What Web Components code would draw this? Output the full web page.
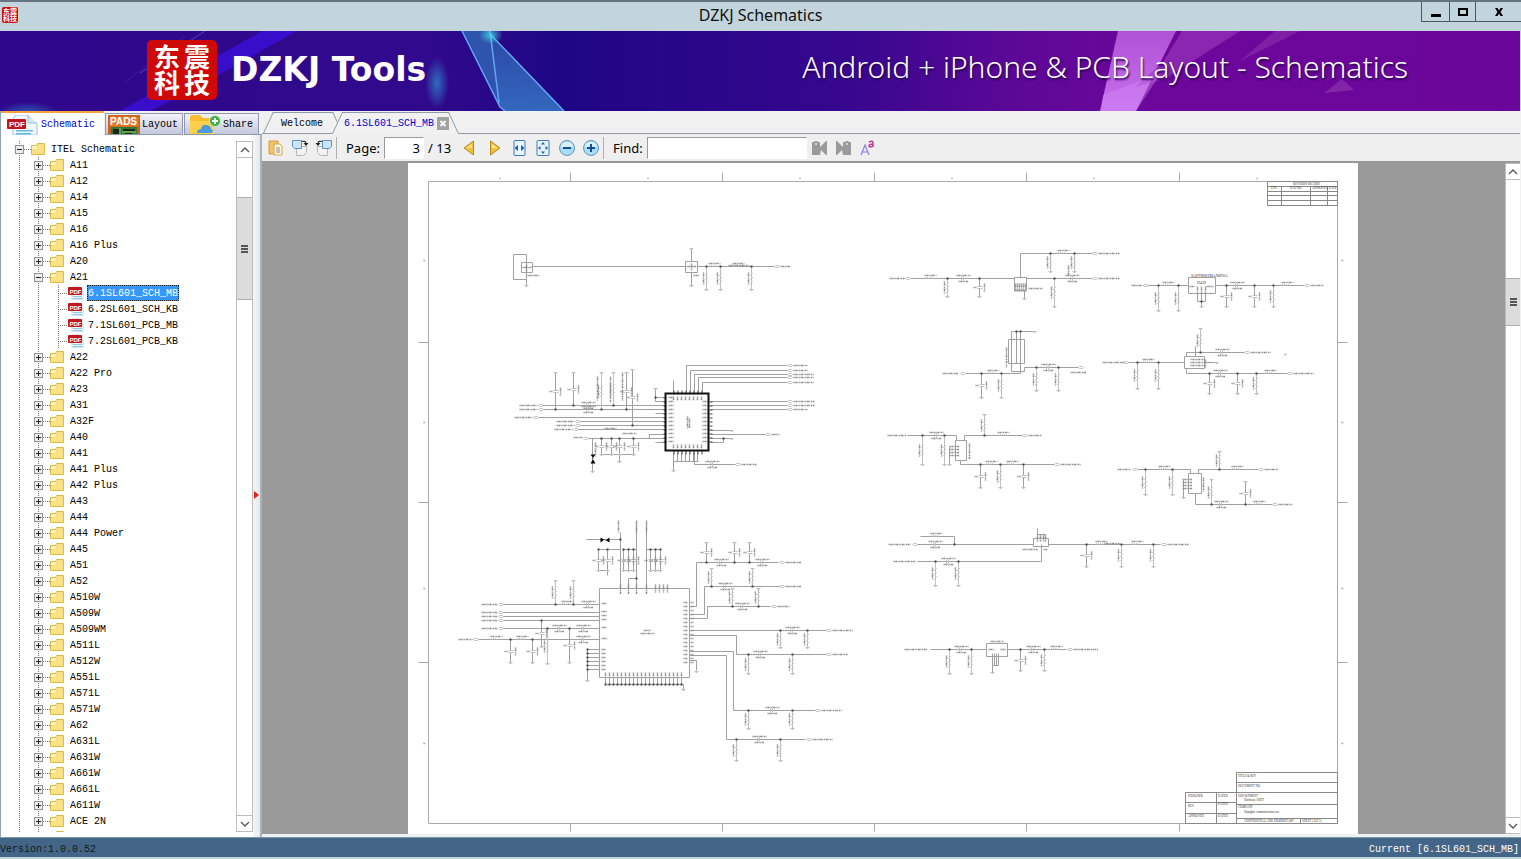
<!DOCTYPE html>
<html lang="en">
<head>
<meta charset="utf-8">
<title>DZKJ Schematics</title>
<style>
html,body{margin:0;height:100%;overflow:hidden}
body{--ui:"Noto Sans","Open Sans",sans-serif;--mono:"Liberation Mono","Noto Sans CJK SC",monospace;--line:#8f9ba6;font:10px/16px var(--mono);color:#000;background:#f0f0f0}
</style>
</head>
<body>
<dz-app></dz-app>
<script>
const define=(name,css,html)=>{
  const t=document.createElement('template');
  t.innerHTML=`<style>*{box-sizing:border-box}button{font:inherit;color:inherit;border:0;background:none;padding:0;margin:0}svg{display:block}${css}</style>${html}`;
  customElements.define(name,class extends HTMLElement{
    constructor(){super();this.attachShadow({mode:'open'}).append(t.content.cloneNode(true));}
  });
};

/* ---------- icons ---------- */
const ICONS={
  folder:[14,12,'<path d="M.5 2.500h5l1-2h7v11H.5z" fill="#f9e083" stroke="#dcb850"/><path d="M1 3h5v3H1z" fill="#fdf2bb"/>'],
  pdf:[16,14,'<path d="M4 1h7l4 4v9H4z" fill="#eef6fb" stroke="#b4cfe0" stroke-width=".8"/><path d="M5 10h9v1H5zm0 2h9v1H5z" fill="#8ccbe8"/><rect y="1" width="14" height="8" rx="1" fill="#c4161e"/><text x="1.500" y="7.500" font-family="Liberation Sans,sans-serif" font-weight="700" font-size="6" fill="#fff">PDF</text>'],
  pdfBig:[32,20,'<path d="M9 0h12l9 9v11H6V4z" fill="#f2f8fd" stroke="#9dbfdc"/><path d="M21 0v8h9" fill="#d3e6f4" stroke="#9dbfdc"/><path d="M9 15h17v1.500H9zm0 3h15v1.500H9z" fill="#67b9dd"/><rect y="4" width="19" height="10" rx="1" fill="#bf1420"/><text x="2" y="12" font-family="Liberation Sans,sans-serif" font-weight="700" font-size="8" fill="#fff">PDF</text>'],
  pads:[32,20,'<rect width="32" height="20" fill="#c9601c"/><rect x="1.500" y="1.500" width="29" height="10" fill="#e07a28"/><rect x="3" y="12" width="26" height="8" fill="#2f7a34"/><path d="M5 14h6v5H5zm10 0h12v2H15zm2 4h7v2h-7z" fill="#1c2420"/><path d="M12 13v6M14 17h14" stroke="#8fd06a"/><text x="2" y="10" font-family="Liberation Sans,sans-serif" font-weight="700" font-size="10" fill="#fff">PADS</text>'],
  share:[32,20,'<path d="M1 2q0-2 2-2h8l3 3h9q2 0 2 2v15H1z" fill="#fbbd2c"/><path d="M1 6h24v14H1z" fill="#ffd04c"/><path d="M8 18q0-4 4-4 1-5 6-4 4 1 4 4 3 1 1 4z" fill="#4c9be2"/><circle cx="26" cy="6" r="5.500" fill="#3fae49" stroke="#c8ecca"/><path d="M26 3v6M23 6h6" stroke="#fff" stroke-width="2"/>'],
  open:[16,16,'<path d="M1 1h9v13H1z" fill="#f3c467" stroke="#cf9a3e"/><path d="M6 4h6l2 2v9H6z" fill="#fff4d4" stroke="#cfa65a"/><path d="M8 8h4M8 10h4M8 12h4" stroke="#8b8f96"/>'],
  rotR:[18,17,'<path d="M5.500 7.500h10v6l-3 3h-7z" fill="#f2f2f2" stroke="#b5b8bb"/><path d="M1.500 1.500h9v8h-7l-2-2z" fill="#cde3f7" stroke="#5f93c4"/><path d="M11 2.500q4-1 4 2" fill="none" stroke="#222" stroke-width="1.200"/><path d="M12.500 4h5L15 7z" fill="#222"/>'],
  rotL:[18,17,'<path d="M2.500 7.500h10v9h-7l-3-3z" fill="#f2f2f2" stroke="#b5b8bb"/><path d="M7.500 1.500h9v6l-2 2h-7z" fill="#cde3f7" stroke="#5f93c4"/><path d="M7 2.500q-4-1-4 2" fill="none" stroke="#222" stroke-width="1.200"/><path d="M.5 4h5L3 7z" fill="#222"/>'],
  prev:[12,16,'<path d="M10.500 1v14L1 8z" fill="#efc23c" stroke="#b98a1e"/><path d="M9 4v4H3.500z" fill="#fbe79a"/>'],
  next:[12,16,'<path d="M1.500 1v14L11 8z" fill="#efc23c" stroke="#b98a1e"/><path d="M3 4v4h5.500z" fill="#fbe79a"/>'],
  fitW:[13,16,'<rect x="1" y=".5" width="11" height="15" rx="1" fill="#e8f3fc" stroke="#3c79b8"/><path d="M1.500 8L5 5v6zM11.500 8L8 5v6z" fill="#1e62a8"/>'],
  fitP:[14,16,'<rect x="1" y=".5" width="12" height="15" rx="1" fill="#e8f3fc" stroke="#3c79b8"/><path d="M7 2l2 2.500H5zM7 14l2-2.500H5zM2 8l2.500-2v4zM12 8L9.500 6v4z" fill="#1e62a8"/>'],
  minus:[16,16,'<circle cx="8" cy="8" r="7.500" fill="#a9dcf8" stroke="#6c94bc"/><path d="M2 7a6 5 0 0 1 12 0z" fill="#d9f1fd"/><path d="M4 8h8" stroke="#0f4f94" stroke-width="2"/>'],
  plus:[16,16,'<circle cx="8" cy="8" r="7.500" fill="#a9dcf8" stroke="#6c94bc"/><path d="M2 7a6 5 0 0 1 12 0z" fill="#d9f1fd"/><path d="M4 8h8M8 4v8" stroke="#0f4f94" stroke-width="2"/>'],
  findP:[15,16,'<path d="M0 2h2l1-1h2l1 1h2v5l6-6h1v14h-1l-5-5-1 5H0z" fill="#9a9a9a"/><circle cx="4" cy="4" r="1" fill="#e4e4e4"/>'],
  findN:[15,16,'<path d="M15 2h-2l-1-1h-2L9 2H7v5L1 1H0v14h1l5-5 1 5h8z" fill="#9a9a9a"/><circle cx="11" cy="4" r="1" fill="#e4e4e4"/>'],
  matchCase:[15,16,'<path d="M1 15L5 5l4 10M2 12h6" fill="none" stroke="#8c7be8" stroke-width="1.200"/><path d="M9 2q4-2 4 1v4M13 4q-4 0-4 2t4 0" fill="none" stroke="#c9378c" stroke-width="1.500"/>'],
  min:[12,12,'<path d="M1 8h10v3H1z"/>'],
  max:[12,12,'<path d="M2 3h8v6H2z" fill="none" stroke="#000" stroke-width="2"/>'],
  close:[12,12,'<path d="M2 2h2.500L6 4.500 7.500 2H10L7.500 6l2.500 4H7.500L6 7.500 4.500 10H2l2.500-4z"/>'],
  tabClose:[12,13,'<rect width="12" height="13" fill="#a3a3a3"/><path d="M3.500 4l5 5m0-5l-5 5" stroke="#fff" stroke-width="1.800"/>'],
  up:[10,6,'<path d="M1 5l4-4 4 4" fill="none" stroke="#555" stroke-width="1.300"/>'],
  down:[10,6,'<path d="M1 1l4 4 4-4" fill="none" stroke="#555" stroke-width="1.300"/>'],
  arrow:[5,8,'<path d="M0 0l5 4-5 4z" fill="#e8231c"/>']
};
const ic=n=>{const[w,h,s]=ICONS[n];return `<svg width="${w}" height="${h}" viewBox="0 0 ${w} ${h}" aria-hidden="true">${s}</svg>`};

/* ---------- title bar ---------- */
define('dz-seal',`
:host{display:grid;grid-template-columns:1fr 1fr;align-content:center;justify-items:center;background:#cf0808;color:#fff;width:70px;height:60px;border-radius:5px;padding:0 5px 2px;font:700 26px/26px "Noto Sans CJK SC",sans-serif}
:host([small]){width:16px;height:16px;border-radius:2px;padding:1px;font-size:7px;line-height:7px}`,
`<span>东</span><span>震</span><span>科</span><span>技</span>`);

define('dz-titlebar',`
:host{display:grid;grid-template-columns:1fr auto 1fr;height:31px;border-top:2px solid #66747f;background:#c3d5dc;flex:none}
dz-seal{margin:5px 0 0 2px}
h1{margin:0;font:400 16px/27px var(--ui);color:#111}
.b{display:flex;justify-self:end;height:20px;border:solid #4c565c;border-width:0 0 1px 1px}
button{display:grid;place-items:center;width:27px}
button+button{border-left:1px solid #4c565c;width:26px}
button:last-child{width:46px}`,
`<dz-seal small></dz-seal><h1>DZKJ Schematics</h1><div class="b"><button aria-label="Minimize">${ic('min')}</button><button aria-label="Maximize">${ic('max')}</button><button aria-label="Close">${ic('close')}</button></div>`);

/* ---------- banner ---------- */
define('dz-banner',`
:host{display:flex;align-items:center;height:80px;flex:none;position:relative;color:#fff;margin-right:1px;padding:0 112px 2px 147px;background:linear-gradient(90deg,#2f078c 0,#31098c 28%,#1d0784 37%,#250687 42%,#37078f 56%,#5a0896 66%,#6d079c 76%,#6b069b 100%)}
.art{position:absolute;inset:0;width:100%;height:100%}
dz-seal,b,span{position:relative}
b{font:700 33px/48px "DejaVu Sans","Noto Sans",sans-serif;margin-left:14px;white-space:nowrap}
span{margin-left:auto;font:300 30px/40px "Noto Sans","Open Sans",sans-serif;text-shadow:1px 2px 2px #2a0050;padding-bottom:6px;white-space:nowrap}`,
`<svg class="art" viewBox="0 0 1520 80" preserveAspectRatio="none" aria-hidden="true">
<defs><linearGradient id="a" x1="0" y1="0" x2="0" y2="1"><stop offset="0" stop-color="#2c5fb0"/><stop offset="1" stop-color="#3a86cf"/></linearGradient>
<linearGradient id="b" x1="0" y1="0" x2="0" y2="1"><stop offset="0" stop-color="#b052d4"/><stop offset="1" stop-color="#c870ee"/></linearGradient>
<radialGradient id="c"><stop offset="0" stop-color="#2f7fc8"/><stop offset="1" stop-color="#2f7fc8" stop-opacity="0"/></radialGradient>
<radialGradient id="d"><stop offset="0" stop-color="#45e0e4"/><stop offset="1" stop-color="#45e0e4" stop-opacity="0"/></radialGradient></defs>
<path d="M262 0h35L190 60l-40 20h-30z" fill="#3c10e0" opacity=".75"/>
<path d="M205 0l-65 42" stroke="#5a5bd0" opacity=".7"/><path d="M185 5l-60 46" stroke="#4a28b0" opacity=".6"/>
<ellipse cx="28" cy="80" rx="30" ry="9" fill="url(#c)" opacity=".6"/>
<ellipse cx="437" cy="52" rx="12" ry="26" fill="url(#c)" opacity=".85"/>
<path d="M462 0h29l9 76z" fill="#2e54ae"/><path d="M491 4l73 76h-60l-5-6z" fill="url(#a)" opacity=".75"/>
<path d="M462 0l38 76 5 4M490 0l9 72M491 4l73 76" stroke="#63a5f3" fill="none" stroke-width="1.500"/>
<ellipse cx="491" cy="4" rx="12" ry="9" fill="url(#d)" opacity=".8"/>
<path d="M1118 0h58l-40 80h-36z" fill="url(#b)"/><path d="M1182 0h58l-75 48-30 8 28-25z" fill="#9a38ba" opacity=".65"/>
<path d="M1103 64l58-22-25 38h-35z" fill="#d58cf8" opacity=".4"/><path d="M1275 0h25l-60 30z" fill="#8c35ad" opacity=".55"/><path d="M1324 62l18-14 12 11z" fill="#8c35ad" opacity=".7"/>
</svg><dz-seal></dz-seal><b>DZKJ Tools</b><span>Android + iPhone &amp; PCB Layout - Schematics</span>`);

/* ---------- scroll bar ---------- */
define('dz-scroll',`
:host{display:flex;flex-direction:column;background:#fff;border:1px solid #bdbdbd;width:17px;flex:none}
button{height:16px;flex:none;display:grid;place-items:center}
.up{border-bottom:1px solid #bdbdbd}.dn{border-top:1px solid #bdbdbd}
.a{flex:var(--before)}.c{flex:var(--after)}
.t{flex:var(--thumb);background:#dcdcdc;border:solid #b0b0b0;border-width:1px 0;display:grid;place-items:center}
i{width:7px;height:8px;background:repeating-linear-gradient(#555 0 2px,transparent 2px 3px)}`,
`<button class="up" aria-label="Scroll up">${ic('up')}</button><div class="a"></div><div class="t"><i></i></div><div class="c"></div><button class="dn" aria-label="Scroll down">${ic('down')}</button>`);

/* ---------- tree ---------- */
const before=['A11','A12','A14','A15','A16','A16 Plus','A20'];
const after='A22,A22 Pro,A23,A31,A32F,A40,A41,A41 Plus,A42 Plus,A43,A44,A44 Power,A45,A51,A52,A510W,A509W,A509WM,A511L,A512W,A551L,A571L,A571W,A62,A631L,A631W,A661W,A661L,A611W,ACE 2N,'.split(',');
const files=['6.1SL601_SCH_MB','6.2SL601_SCH_KB','7.1SL601_PCB_MB','7.2SL601_PCB_KB'];
const branch=(l,kids='')=>`<li role="treeitem"><div class="r"><button class="x" aria-label="${kids?'Collapse':'Expand'} ${l}"><svg width="7" height="7"><path d="M1 3.500h5${kids?'':'M3.500 1v5'}" stroke="#222"/></svg></button><i></i>${ic('folder')}<span>${l}</span></div>${kids}</li>`;
const leaf=(l,s)=>`<li role="treeitem"${s?' aria-selected="true"':''}><div class="r f"><i></i>${ic('pdf')}<span class="${s?'sel':''}">${l}</span></div></li>`;
define('dz-tree',`
:host{display:block;overflow:hidden;flex:1;min-height:0}
ul{list-style:none;margin:0;padding:0;background:linear-gradient(#777 50%,transparent 50%) 4px 0/1px 2px repeat-y}
ul ul{margin-left:19px}
ul ul ul{margin-left:20px}
.r{display:flex;align-items:center;height:16px;white-space:pre}
.r>svg{flex:none}
.x{width:9px;height:9px;flex:none;border:1px solid #919191;background:#ececec}
i{width:7px;flex:none;height:1px;background:linear-gradient(90deg,#777 50%,transparent 50%) 0/2px 1px}
.f{padding-left:4px}.f i{width:10px}
span{margin-left:5px;padding:1px 1px 0;height:16px;line-height:16px}
.f span{margin-left:3px}
.sel{background:#3596fb;color:#fff;outline:1px dotted #222;outline-offset:-1px}`,
`<ul role="tree" aria-label="Schematics">${branch('ITEL Schematic',`<ul role="group">${before.map(l=>branch(l)).join('')}${branch('A21',`<ul role="group">${files.map((f,i)=>leaf(f,!i)).join('')}</ul>`)}${after.map(l=>branch(l)).join('')}</ul>`)}</ul>`);

/* ---------- left pane ---------- */
define('dz-side',`
:host{display:flex;flex-direction:column;width:262px;flex:none;border-left:1px solid #8fa3ae;background:#f0f2f4}
.tabs{display:flex;height:24px;align-items:flex-end;flex:none}
.tabs button{display:flex;align-items:center;gap:2px;height:22px;padding:1px 3px 0 2px;border:1px solid #8e97ae;border-bottom-color:var(--line);background:linear-gradient(#f3f3f8,#c3c7de);overflow:hidden}
.tabs button.on{height:24px;width:103px;padding-left:6px;border:0;border-top:2px solid #f5a33a;background:#fff;color:#0000c8}
.tabs button:nth-child(2){width:78px;margin:0 1px 0 1px}.tabs button:nth-child(3){width:75px;padding-left:4px}
.tabs::after{content:"";flex:1;border-bottom:1px solid var(--line)}
.body{display:flex;flex:1;min-height:0;background:#fff}
.in{display:flex;flex:1;padding:6px 0 5px 14px;min-width:0}
.split{width:9px;background:linear-gradient(90deg,#f4f6f7,#e6eaec);border-right:2px solid #a9b4ba;display:grid;place-items:center}
.split svg{margin-top:18px}
dz-scroll{--before:39;--thumb:101;--after:514}`,
`<div class="tabs" role="tablist"><button role="tab" class="on" aria-selected="true">${ic('pdfBig')}<span>Schematic</span></button><button role="tab">${ic('pads')}<span>Layout</span></button><button role="tab">${ic('share')}<span>Share</span></button></div>
<div class="body"><div class="in"><dz-tree></dz-tree><dz-scroll></dz-scroll></div><div class="split">${ic('arrow')}</div></div>`);

/* ---------- document tabs ---------- */
define('dz-doctab',`
:host{display:block;position:relative;height:22px;flex:none}
button{position:relative;z-index:1;display:flex;align-items:center;gap:3px;height:22px;padding:1px 20px 0 18px;white-space:pre}
:host([active]){margin-left:-11px}
:host([active]) button{color:#0000d0;padding:1px 10px 0 12px}
:host::before,:host::after{content:"";position:absolute;top:0;bottom:1px;border-top:1px solid var(--line);background:#f1f1f1}
:host([active])::before,:host([active])::after{bottom:0}
:host::before{left:5px;right:50%;border-left:1px solid var(--line);transform:skewX(-25deg)}
:host::after{left:40%;right:5px;border-right:1px solid var(--line);transform:skewX(25deg)}`,
`<button role="tab"><slot></slot></button>`);

/* ---------- toolbar ---------- */
const tb=(n,l)=>`<button aria-label="${l}">${ic(n)}</button>`;
define('dz-toolbar',`
:host{display:flex;align-items:center;height:29px;flex:none;padding-left:2px;border-bottom:2px solid #999;background:#efeff0;font:13px/20px var(--ui)}
button{width:24px;height:24px;display:grid;place-items:center}
hr{width:1px;height:22px;border:0;margin:0 9px 0 0;background:#b0b0b0}
input{font:13px/18px var(--ui);height:22px;border:1px solid #fff;border-top-color:#999;border-left-color:#999;background:#fff;border-radius:0;margin:0 4px;padding:0 4px;outline:0}
#p{width:40px;text-align:right;padding-right:3px}
#f{width:160px;margin-right:1px}
.n{margin-right:6px}.nav{display:flex}.nav button:nth-child(2){margin-left:2px}`,
`${tb('open','Open')}${tb('rotR','Rotate right')}${tb('rotL','Rotate left')}<hr><label for="p">Page:</label><input id="p" value="3"><span class="n">/ 13</span><div class="nav">${tb('prev','Previous page')}${tb('next','Next page')}${tb('fitW','Fit width')}${tb('fitP','Fit page')}${tb('minus','Zoom out')}${tb('plus','Zoom in')}</div><hr><label for="f">Find:</label><input id="f" type="text">${tb('findP','Find previous')}${tb('findN','Find next')}${tb('matchCase','Match case')}`);

/* ---------- schematic sheet ---------- */
function drawSheet(){
  const wires=[],faint=[],dots=[],notes=[],ports=[],txt=[];
  const W=s=>wires.push('M'+s);
  const R=(x,y,x2,y2)=>wires.push(`M${x} ${y}H${x2}V${y2}H${x}z`);
  const D=(x,y)=>dots.push(`M${x-1} ${y-1}h2v2h-2z`);
  const L=(x,y,w)=>notes.push(`M${x} ${y}h${w}`);
  const V=(x,y,h)=>notes.push(`M${x} ${y}v${h}`);
  const P=(x,y,w)=>{ports.push(`M${x-2} ${y}l1-1h3l1 1-1 1h-3z`);if(w)L(x+4,y,w)};
  const G=(x,y)=>faint.push(`M${x-2} ${y}h4M${x-1} ${y+1}h2`);
  const end=(x,a,b,k)=>{const s=b>a?1:-1,m=Math.round((a+b)/2);D(x,a);
    if(k==='c'){W(`${x} ${a}V${m-s}M${x} ${m+s}V${b}`);faint.push(`M${x-2} ${m-1}h5M${x-2} ${m+1}h5`);V(x+5,m-4,8);L(x-6,m,3)}
    else{W(`${x} ${a}V${m-6*s}`);faint.push(`M${x} ${a}V${b}`);faint.push(`M${x} ${m-6}l1 1-2 2 2 2-2 2 2 2-2 2 1 1`);V(x-3,m-6,12)}
    G(x,b)};
  const ends=(y,b,s)=>s.split(' ').forEach(t=>end(+t.slice(1),y,b,t[0]));
  const seriesC=(x,y)=>{notes.push(`M${x-6} ${y-3}h14`);faint.push(`M${x-1} ${y-2}v4M${x+1} ${y-2}v4`);L(x-4,y+3,10)};
  const coil=(x,y)=>{L(x-5,y-3,12);faint.push(`M${x-5} ${y}q1-2 2 0q1-2 2 0q1-2 2 0q1-2 2 0`)};

  /* crystal row */
  W('526 254H513V279H526V254M526 285V272M532 266H685M697 266H774M691 248V261M691 272V285');R(521,262,532,272);R(685,261,697,272);
  L(522,267,9);V(526,264,7);L(527,275,12);L(686,266,10);V(691,263,7);L(693,275,6);G(526,285);G(691,285);G(691,248);P(776,266,10);
  ends(266,289,'r706 r720 r751');coil(713,266);coil(737,266);L(728,265,20);

  /* RF receiver */
  [[686,365],[690,370],[694,374],[698,377],[702,382]].forEach(([x,y])=>{W(`${x} 391V${y}H787`);P(789,y,y>373?20:14)});
  [401,405,409].forEach(y=>{W(`710 ${y}H787`);P(789,y,y<409?21:14)});
  W('710 430H730M710 434H765M710 438H730M710 442H723V438');P(767,434,8);G(731,430);G(731,438);D(723,438);
  [[405,542],[409,542],[417,537],[421,579],[425,579],[429,577]].forEach(([y,x])=>{W(`${x} ${y}H664`);P(x-2,y);L(x-23,y,18)});
  W('587 438H664M649 438V434H664M655 388V401H664M655 397H664M655 413H664M655 442H664');P(585,438);L(573,437,9);D(655,397);G(655,388);
  ends(409,372,'c555 r601 c626');ends(405,372,'c573 r613');end(632,425,369,'c');
  V(597,376,24);V(622,372,28);V(610,376,26);seriesC(587,405);seriesC(587,409);L(604,428,12);L(622,433,14);
  ends(438,454,'c601 c611 c619 c633');W('601 454H633M619 454V461M592 438V471');G(592,471);G(619,461);V(595,442,14);
  W('673 461H698M673 461V470M694 452V464H735');P(737,464,15);G(673,470);seriesC(711,464);W('673 380V391');
  for(let i=0;i<8;i++){const x=673+i*4;dots.push(`M${x} 390h1v4h-1zM${x} 450h1v4h-1z`);V(x,396,4);V(x,444,4);if(i<7)W(`${x} 452V461`)}
  for(let i=0;i<12;i++){const y=397+i*4;dots.push(`M663 ${y}h3v1h-3z`);L(668,y,5);if(i){dots.push(`M709 ${y}h3v1h-3z`);L(702,y,5)}}
  V(687,416,12);V(689,418,10);

  /* transceiver */
  R(599,588,689,677);
  [604,612,616,620,628].forEach(y=>{W(`502 ${y}H599`);P(500,y);L(481,y,16);L(601,y-1,5)});
  W('477 639H599');P(475,639);L(458,639,14);L(601,638,6);
  ends(604,580,'r555 r573');end(541,620,646,'c');end(547,628,663,'r');end(569,628,662,'c');end(510,639,662,'c');end(532,639,662,'c');
  coil(566,604);seriesC(587,604);seriesC(558,628);seriesC(582,628);seriesC(582,639);coil(495,639);coil(521,639);
  for(let y=649;y<671;y+=4){W(`587 ${y}H599`);D(587,y);L(601,y,4)}W('587 649V680');G(587,680);
  for(let x=605;x<685;x+=4){W(`${x} 677V684`);V(x,672,4);D(x,684)}W('605 684H683V689');G(683,689);
  W('620 532V588M636 524V588M646 524V588M628 588V578H636M586 539H620M598 549H620M598 570H607V575M623 549H636M623 570H633M646 549H660M650 570H660');
  [618,636,646].forEach(x=>V(x,520,12));ends(549,570,'c598 c607 c623 c628 c633 c650 c655 c660');D(620,539);D(636,578);
  for(let x=655;x<670;x+=4)V(x,584,8);[620,628,636,646].forEach(x=>V(x,584,10));
  for(let y=602;y<666;y+=4){L(683,y,4);L(690,y,3)}
  W('689 606H696V562H778M689 614H704V586H780M689 618H707V606H770M689 630H826M689 635H736V654H826M689 651H733V710H815M689 655H726V739H805M689 660H696V670');G(696,671);
  P(781,562,16);P(781,586,16);P(773,606,12);P(828,630,20);P(828,654,15);P(817,710,20);P(808,739,20);
  ends(562,542,'c706 c734 c749');ends(586,568,'r711 r752');ends(606,588,'r732 r758');ends(630,647,'r780 r807');ends(654,673,'r748 r792');ends(710,728,'r748 r792');ends(739,760,'r736 r780');
  [[720,562],[761,562],[724,586],[741,606],[791,630],[759,654],[771,710],[758,739]].forEach(a=>seriesC(...a));
  L(643,630,7);L(640,633,14);

  /* right column */
  W('910 278H1014M1020 277V253H1092M1026 278H1092');L(889,278,15);P(907,278);R(1014,277,1026,290);for(let x=1015;x<1026;x+=2)V(x,283,8);W('1024 290V298');G(1024,298);L(1028,288,14);
  ends(278,296,'r947 c979');coil(929,278);seriesC(962,278);ends(253,271,'r1050 r1074');coil(1062,253);end(1054,278,306,'r');seriesC(1071,278);P(1094,253,21);P(1094,278,21);V(1068,265,10);
  W('1147 285H1188M1215 285H1304');R(1188,277,1215,293);L(1131,285,12);P(1145,285);P(1306,285,13);ends(285,310,'r1158 r1178');ends(285,306,'c1226 c1254 r1273');coil(1167,285);seriesC(1236,285);coil(1286,285);
  [1197,1201,1205].forEach(x=>{V(x,286,8);W(`${x} 294V301`)});W('1197 301H1205M1201 301V306');D(1201,301);G(1201,306);L(1189,286,5);L(1206,286,7);
  txt.push([1191,277,4,'SAFFB881MAN0F0A'],[1197,284,4,'D439']);
  R(1008,339,1024,363);W('1011 363V331H1033M1016 331V363M1020 331V373M965 373H1020M1011 363V371H1024V367H1078');V(1006,347,20);D(1016,331);D(1020,331);G(1034,331);L(942,373,16);P(962,373);P(1080,367);L(1070,372,16);
  ends(373,397,'c981 r1001');coil(992,373);ends(367,390,'r1036 r1058');seriesC(1047,367);
  W('1127 362H1184M1186 356V352H1244M1186 368V373H1287M1204 362H1215');R(1184,356,1204,368);[359,362,365].forEach(y=>L(1190,y,14));V(1205,359,8);L(1102,362,22);P(1125,362);P(1246,352,20);P(1289,373,20);
  ends(362,388,'r1137 r1158');coil(1147,362);end(1200,352,328,'r');seriesC(1221,352);ends(373,393,'c1209 c1237 r1256');seriesC(1219,373);coil(1269,373);G(1216,362);W('1195 346V356');L(1284,354,2);

  W('907 435H956V440M964 440V435H1022M960 460V464H1054');R(955,440,966,460);L(887,435,19);P(1024,435,13);P(1056,464,20);V(969,443,16);
  [446,449,452,455].forEach(y=>L(949,y,10));W('949 446V464');G(949,464);ends(435,464,'r922 r944');end(984,435,414,'r');seriesC(935,435);coil(1002,435);ends(464,487,'c980 r1000 c1023');coil(990,464);coil(1011,464);
  W('1137 469H1190V473M1198 473V469H1258M1195 493V504H1272');R(1188,473,1201,493);V(1203,477,14);[479,482,485,488].forEach(y=>L(1182,y,10));W('1183 479V497');G(1183,497);L(1117,469,13);P(1134,469);P(1260,469,14);P(1274,504,14);
  ends(469,494,'r1145 r1172');end(1219,469,451,'r');end(1211,504,479,'r');end(1245,504,481,'c');coil(1163,469);coil(1236,469);seriesC(1220,504);coil(1258,504);
  W('916 544H1033M1048 544H1160M920 536H954V544M917 561H1041V544');R(1033,538,1048,546);[1037,1040,1043,1045].forEach(x=>V(x,534,7));W('1037 528V534H1045');L(1022,549,15);L(1043,549,4);L(888,544,22);P(914,544);P(1163,544,21);L(893,561,22);
  coil(935,536);seriesC(934,544);seriesC(947,561);ends(561,585,'r935 r958');end(1086,544,566,'c');ends(544,566,'r1121 r1153');coil(1100,544);L(1104,543,15);coil(1136,544);D(954,544);
  W('930 649H986M1007 649H1066');R(986,643,1007,656);L(988,649,6);L(1000,649,6);L(990,641,13);L(904,649,23);P(1069,649,25);[992,994,996,998].forEach(x=>W(`${x} 653V665`));W('992 665H998M992 665V672');G(992,672);
  ends(649,673,'r949 r971');ends(649,670,'c1020 r1044');seriesC(960,649);seriesC(1032,649);coil(1055,649);

  /* border, revision table, title block */
  const frame='M428 181H1337V823H428z'+[571,723,875,1027,1180].map(x=>`M${x-1} 172V181M${x-1} 823V831`).join('')+[342,502,662].map(y=>`M418 ${y}H428M1337 ${y}H1347`).join('');
  const tab='M1267 181H1337V205H1267zM1267 186H1337M1267 191H1337M1267 195H1337M1267 200H1337M1281 186V205M1310 186V205M1327 186V205M1236 772H1337V823H1236zM1236 782H1337M1236 792H1337M1236 804H1337M1236 818H1337M1236 792H1185V823H1236M1216 792V823M1185 802H1236M1185 813H1236M1300 818V823';
  [499,647,799,951,1093,1256].forEach(x=>L(x,178,1));[260,422,588,743].forEach(y=>{L(423,y,2);L(1341,y,2)});
  txt.push([1238,777,3,'TITLE & REV'],[1238,787,3,'DOCUMENT NO.'],[1238,797,3,'DEPARTMENT'],[1244,801,3,'Hardware DEPT'],[1238,808,3,'COMPANY'],[1244,813,3,'Shanghai communication inc.'],[1244,822,3,'CONFIDENTIAL AND PROPRIETARY'],[1302,822,3,'SHEET 3 OF 13'],
   [1188,797,3,'DESIGNER'],[1188,807,3,'REV.'],[1188,817,3,'APPROVED'],[1218,797,3,'DATED'],[1218,805,3,'DATED'],[1218,817,3,'DATED'],[1293,185,3,'REVISION RECORD'],[1271,189,3,'LTR'],[1290,189,3,'ECO NO.'],[1312,189,3,'APPROVED'],[1329,189,3,'DATE']);
  const p=(d,a)=>`<path d="${d.join?d.join(''):d}" ${a}/>`;
  return `<svg viewBox="408 163 950 671" role="img" aria-label="Schematic sheet 3 of 13"><g fill="none" transform="translate(.5 .5)">
  ${p(frame,'stroke="#aaa"')}${p(tab,'stroke="#888"')}${p(wires,'stroke="#a0a0a0"')}${p(faint,'stroke="#c0c0c0"')}${p(ports,'stroke="#aaa" fill="#fff" stroke-width=".7"')}
  ${p(notes,'stroke="#8c8c8c" stroke-width="1.500" stroke-dasharray="1.200 .6 2 .5 .8 .7"')}${p(dots,'fill="#444"')}
  ${p('M665 393H708V450H665z','stroke="#111" stroke-width="2"')}${p('M590 454h5l-3 4 3 5h-5l3-5zM600 537v5l4-3 5 3v-5l-4 3z','fill="#000"')}</g>
  <g font-family="Liberation Serif,serif" fill="#333">${txt.map(([x,y,s,t])=>`<text x="${x}" y="${y}" font-size="${s}">${t.replace('&','&amp;')}</text>`).join('')}</g></svg>`;
}
define('dz-sheet',`:host{display:block;height:100%;aspect-ratio:950/671;background:#fff}svg{width:100%;height:100%}`,drawSheet());

define('dz-viewer',`
:host{display:flex;flex-direction:column;flex:1;min-width:0;margin-right:1px}
.tabs{display:flex;height:23px;padding:1px 0 0 1px;flex:none;background:linear-gradient(var(--line),var(--line)) 0 100%/100% 1px no-repeat,#f0f0f0;align-items:flex-end}
.view{display:flex;flex:1;min-height:0;background:#999}
.c{flex:1;display:flex;justify-content:center;min-width:0;overflow:hidden;padding-right:1px}
dz-scroll{width:15px;border-right:0;--before:98;--thumb:46;--after:491}
.foot{height:3px;flex:none;background:#eef1f3}`,
`<div class="tabs" role="tablist"><dz-doctab>Welcome</dz-doctab><dz-doctab active>6.1SL601_SCH_MB${ic('tabClose')}</dz-doctab></div><dz-toolbar></dz-toolbar><div class="view"><div class="c"><dz-sheet></dz-sheet></div><dz-scroll></dz-scroll></div><div class="foot"></div>`);

define('dz-status',`
:host{display:flex;justify-content:space-between;height:22px;flex:none;background:#436688;border-bottom:2px solid #c3d5dc;border-top:1px solid #7d95a8;padding:4px 2px 0 0;color:#101820}
span:last-child{color:#fff}`,`<span>Version:1.0.0.52</span><span>Current [6.1SL601_SCH_MB]</span>`);

define('dz-app',`
:host{display:flex;flex-direction:column;height:100vh;background:#c3d5dc}
main{display:flex;flex:1;min-height:0;background:#f0f0f0}`,
`<dz-titlebar></dz-titlebar><dz-banner></dz-banner><main><dz-side></dz-side><dz-viewer></dz-viewer></main><dz-status></dz-status>`);
</script>
</body>
</html>
